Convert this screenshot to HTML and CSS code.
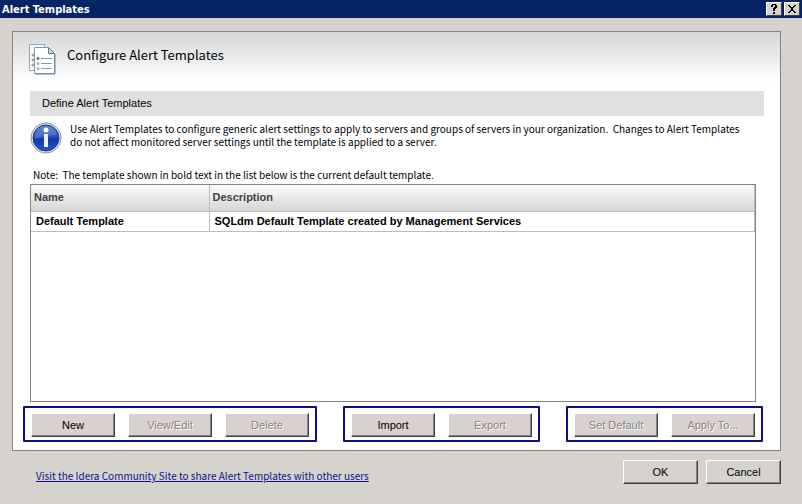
FILE: index.html
```html
<!DOCTYPE html>
<html lang="en">
<head>
    <meta charset="UTF-8">
    <meta name="viewport" content="width=device-width, initial-scale=1.0">
    <title>Alert Templates</title>
    <link rel="stylesheet" href="styles.css">
</head>
<body>
    <header class="title-bar">
        <h1 class="title">Alert Templates</h1>
        <button class="title-btn" type="button" aria-label="Help">
            <svg width="10" height="10" viewBox="0 0 10 10" shape-rendering="crispEdges">
                <path d="M3 0h4v1h1v3h-1v1h-1v2h-2v-3h1v-1h1v-2h-2v2h-2v-2h1zM4 8h2v2h-2z"/>
            </svg>
        </button>
        <button class="title-btn" type="button" aria-label="Close">
            <svg width="10" height="10" viewBox="0 0 10 10" shape-rendering="crispEdges">
                <path d="M1 1h2v1h1v1h2v-1h1v-1h2v1h-1v1h-1v1h-1v2h1v1h1v1h1v1h-2v-1h-1v-1h-2v1h-1v1h-2v-1h1v-1h1v-1h1v-2h-1v-1h-1v-1h-1z"/>
            </svg>
        </button>
    </header>

    <main class="panel">
        <div class="panel-header">
            <svg class="page-icon" width="30" height="34" viewBox="0 0 30 34">
                <path d="M1.5 2.5h15v26h-15z" fill="#f7fafc" stroke="#8ea3b3"/>
                <g fill="none" stroke="#7d8a96">
                    <circle cx="5" cy="13" r="1"/>
                    <circle cx="5" cy="18" r="1"/>
                    <circle cx="5" cy="23" r="1"/>
                </g>
                <path d="M6.500 5.500h14l6 6v20h-20z" fill="#fff" stroke="#8399aa"/>
                <path d="M20.500 5.500v6h6z" fill="#c3d7e4" stroke="#5f7f96"/>
                <path d="M7 32h20v-20" fill="none" stroke="#6f899c"/>
                <path d="M13 16.500h11M13 21.500h11M13 26.500h11" stroke="#8d9aa8"/>
                <g fill="#fff" stroke="#7c93a5">
                    <circle cx="10" cy="16.500" r="1" fill="#536270" stroke="#536270"/>
                    <circle cx="10" cy="21.500" r="1"/>
                    <circle cx="10" cy="26.500" r="1"/>
                </g>
            </svg>
            <h2 class="panel-title">Configure Alert Templates</h2>
        </div>

        <div class="panel-body">
            <h3 class="section-title">Define Alert Templates</h3>
            <div class="info">
                <svg class="info-icon" width="32" height="32" viewBox="0 0 32 32">
                    <defs>
                        <linearGradient id="ball" x1="0" y1="0" x2="0" y2="1">
                            <stop offset="0" stop-color="#4d74cf"/>
                            <stop offset="0.45" stop-color="#2552bd"/>
                            <stop offset="0.55" stop-color="#123ba6"/>
                            <stop offset="1" stop-color="#2457cb"/>
                        </linearGradient>
                    </defs>
                    <circle cx="16" cy="16" r="15" fill="#e4e8ee" stroke="#8b93a1"/>
                    <circle cx="16" cy="16" r="13" fill="url(#ball)" stroke="#1b3a88"/>
                    <path d="M5 17a11 11 0 0 1 22-4q-9 0-22 4z" fill="#fff" opacity="0.14"/>
                    <circle cx="16" cy="8" r="2.500" fill="#fff"/>
                    <path d="M14 12h4v13h-4z" fill="#e9effb"/>
                </svg>
                <p class="info-text">Use Alert Templates to configure generic alert settings to apply to servers and groups of servers in your organization.&nbsp; Changes to Alert Templates do not affect monitored server settings until the template is applied to a server.</p>
            </div>
            <p class="note">Note:&nbsp; The template shown in bold text in the list below is the current default template.</p>
            <div class="list">
                <table class="templates">
                    <thead>
                        <tr>
                            <th class="col-name">Name</th>
                            <th>Description</th>
                        </tr>
                    </thead>
                    <tbody>
                        <tr>
                            <td>Default Template</td>
                            <td>SQLdm Default Template created by Management Services</td>
                        </tr>
                    </tbody>
                </table>
            </div>
        </div>

        <div class="actions">
            <div class="group">
                <button class="btn" type="button">New</button>
                <button class="btn" type="button" disabled>View/Edit</button>
                <button class="btn" type="button" disabled>Delete</button>
            </div>
            <div class="group">
                <button class="btn" type="button">Import</button>
                <button class="btn" type="button" disabled>Export</button>
            </div>
            <div class="group">
                <button class="btn" type="button" disabled>Set Default</button>
                <button class="btn" type="button" disabled>Apply To...</button>
            </div>
        </div>
    </main>

    <footer class="footer">
        <a class="link" href="#">Visit the Idera Community Site to share Alert Templates with other users</a>
        <button class="btn btn-dialog" type="button">OK</button>
        <button class="btn btn-dialog" type="button">Cancel</button>
    </footer>
</body>
</html>
```

FILE: styles.css
```css
* {
    box-sizing: border-box;
}
body {
    margin: 0;
    min-height: 100vh;
    display: flex;
    flex-direction: column;
    background: #d6d3ce;
    color: #000;
    font-family: "Liberation Sans", Arial, sans-serif;
    font-size: 11px;
    line-height: 13px;
}
h1, h2, h3, p {
    margin: 0;
    font-weight: normal;
}
.title-bar {
    display: flex;
    align-items: center;
    gap: 2px;
    height: 18px;
    padding: 0 2px;
    background: #042464;
}
.title {
    flex: 1;
    color: #fff;
    font-family: "DejaVu Sans Condensed", "DejaVu Sans", sans-serif;
    font-size: 11px;
    font-weight: bold;
}
.title-btn {
    display: flex;
    align-items: center;
    justify-content: center;
    width: 16px;
    height: 14px;
    padding: 0;
    border: 1px solid;
    border-color: #fff #404040 #404040 #fff;
    background: #d6d3ce;
}
.panel {
    flex: 1;
    display: flex;
    flex-direction: column;
    margin: 13px 21px 0 12px;
    padding-bottom: 8px;
    border: 1px solid #848484;
    background: linear-gradient(#d6d6d6, #fff 50px);
}
.panel-header {
    display: flex;
    align-items: flex-start;
    gap: 9px;
    height: 59px;
    padding: 10px 15px;
}
.panel-title {
    padding-top: 4px;
    font-family: "Noto Sans CJK SC", "Liberation Sans", sans-serif;
    font-size: 13px;
    line-height: 18px;
}
.panel-body {
    flex: 1;
    display: flex;
    flex-direction: column;
    padding: 0 16px 0 17px;
}
.section-title {
    padding: 6px 12px;
    background: #e0e0e0;
    font-size: 11px;
}
.info {
    display: flex;
    gap: 8px;
    padding: 6px 12px 0 0;
}
.info-icon {
    flex: none;
}
.info-text,
.note,
.link {
    font-family: "Noto Sans CJK SC", "Liberation Sans", sans-serif;
    font-size: 10px;
}
.note {
    padding: 14px 3px 3px;
}
.list {
    flex: 1;
    margin-right: 8px;
    border: 1px solid #848484;
}
.templates {
    width: 100%;
    border-collapse: collapse;
    font-weight: bold;
}
.templates th {
    height: 26px;
    padding: 0 3px;
    border-right: 1px solid #bdbdbd;
    border-bottom: 1px solid #bdbdbd;
    background: linear-gradient(#fbfbfb, #d6d6d6);
    color: #424242;
    text-align: left;
}
.templates td {
    height: 20px;
    padding: 0 5px;
    border-right: 1px solid #bdbdbd;
    border-bottom: 1px solid #bdbdbd;
}
.templates .col-name {
    width: 178px;
}
.actions {
    display: flex;
    justify-content: space-between;
    padding: 4px 17px 0 10px;
}
.group {
    display: flex;
    gap: 13px;
    padding: 5px 6px 3px;
    border: 2px solid #0c0c94;
    border-radius: 1px;
}
.btn {
    width: 84px;
    height: 24px;
    padding: 0;
    border: 1px solid;
    border-color: #fff #424142 #424142 #fff;
    background: #d6d3ce;
    box-shadow: inset -1px -1px #848284;
    color: #000;
    font: inherit;
}
.btn:disabled {
    color: #848284;
    text-shadow: 1px 1px #fff;
}
.footer {
    display: flex;
    align-items: flex-start;
    gap: 8px;
    padding: 9px 21px 20px 36px;
}
.link {
    margin-right: auto;
    padding-top: 9px;
    color: #10108c;
}
.btn-dialog {
    width: 75px;
}
```
